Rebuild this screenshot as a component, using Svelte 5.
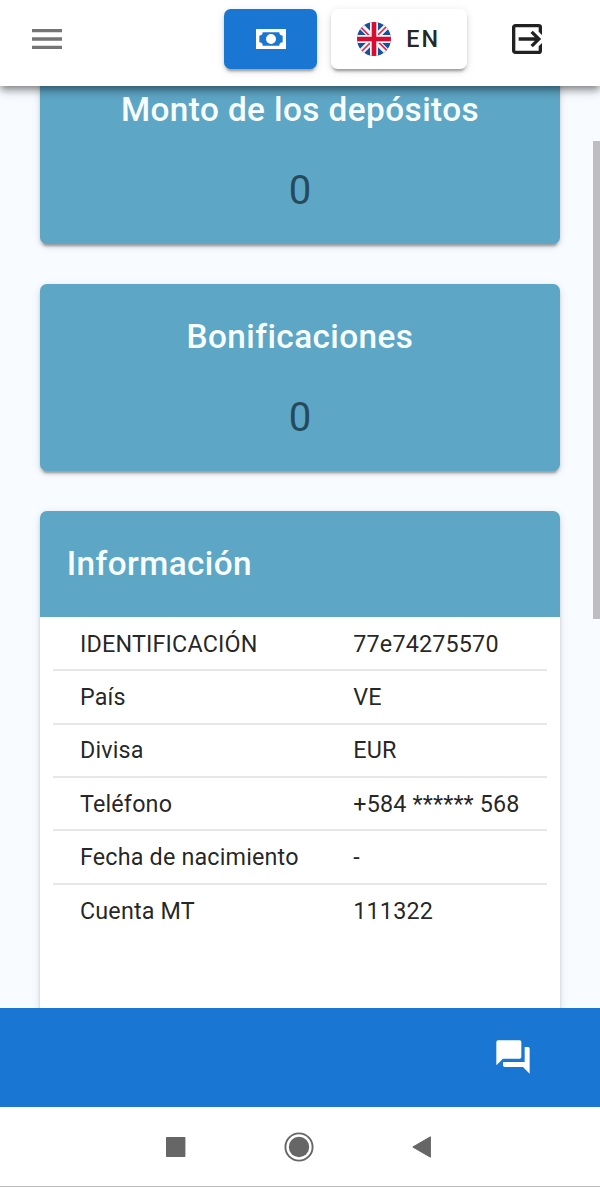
<script>
  const stats = [
    { title: 'Monto de los depósitos', value: '0' },
    { title: 'Bonificaciones', value: '0' }
  ];
  const info = [
    ['IDENTIFICACIÓN', '77e74275570'],
    ['País', 'VE'],
    ['Divisa', 'EUR'],
    ['Teléfono', '+584 ****** 568'],
    ['Fecha de nacimiento', '-'],
    ['Cuenta MT', '111322']
  ];
</script>

<div class="screen">
  <header>
    <svg class="icon menu" viewBox="0 0 24 24"><path d="M3,6H21V8H3V6M3,11H21V13H3V11M3,16H21V18H3V16Z" /></svg>
    <button class="cash" aria-label="Cash">
      <svg class="icon" viewBox="0 0 24 24"><path d="M3,6H21V18H3V6M12,9A3,3 0 0,1 15,12A3,3 0 0,1 12,15A3,3 0 0,1 9,12A3,3 0 0,1 12,9M7,8A2,2 0 0,1 5,10V14A2,2 0 0,1 7,16H17A2,2 0 0,1 19,14V10A2,2 0 0,1 17,8H7Z" /></svg>
    </button>
    <button class="lang">
      <svg class="flag" viewBox="0 0 34 34">
        <defs><clipPath id="round"><circle cx="17" cy="17" r="17" /></clipPath></defs>
        <g clip-path="url(#round)">
          <rect width="34" height="34" fill="#17509b" />
          <path d="M0 0L34 34M34 0L0 34" stroke="#f3f3fa" stroke-width="6" />
          <path d="M3 4.4L13 14.4M21 13L31 3M31 29.6L21 19.6M13 21L3 31" stroke="#d5304f" stroke-width="1.7" />
          <path d="M17 0V34M0 17H34" stroke="#f7f5fa" stroke-width="8" />
          <path d="M17 0V34M0 17H34" stroke="#d80b30" stroke-width="4.6" />
        </g>
      </svg>
      <span>EN</span>
    </button>
    <svg class="icon exit" viewBox="0 0 24 24"><path d="M14.08,15.59L16.67,13H7V11H16.67L14.08,8.41L15.5,7L20.5,12L15.5,17L14.08,15.59M19,3A2,2 0 0,1 21,5V9.67L19,7.67V5H5V19H19V16.33L21,14.33V19A2,2 0 0,1 19,21H5C3.89,21 3,20.1 3,19V5C3,3.89 3.89,3 5,3H19Z" /></svg>
  </header>

  <main>
    {#each stats as stat}
      <section class="card stat">
        <h2>{stat.title}</h2>
        <p>{stat.value}</p>
      </section>
    {/each}
    <section class="card details">
      <h2>{'Información'}</h2>
      <dl>
        {#each info as [label, value]}
          <div class="row"><dt>{label}</dt><dd>{value}</dd></div>
        {/each}
      </dl>
    </section>
    <div class="scrollbar"></div>
  </main>

  <footer>
    <svg class="icon" viewBox="0 0 24 24"><path d="M17,12V3A1,1 0 0,0 16,2H3A1,1 0 0,0 2,3V17L6,13H16A1,1 0 0,0 17,12M21,6H19V15H6V17A1,1 0 0,0 7,18H18L22,22V7A1,1 0 0,0 21,6Z" /></svg>
  </footer>

  <nav>
    <svg width="20" height="20" viewBox="0 0 20 20"><rect width="19.4" height="20" rx="0.8" /></svg>
    <svg width="30" height="30" viewBox="0 0 30 30"><circle cx="15" cy="15" r="13.6" fill="none" stroke="#666" stroke-width="1.9" /><circle cx="15" cy="15" r="10.2" /></svg>
    <svg width="20" height="22" viewBox="0 0 20 22"><path d="M0.8 11L18.4 0.8V21.2Z" stroke="#666" stroke-width="1" stroke-linejoin="round" /></svg>
  </nav>
</div>

<style>
  :global(body) { margin: 0; }
  .screen {
    width: 600px;
    height: 1187px;
    display: flex;
    flex-direction: column;
    overflow: hidden;
    background: #f8fbff;
    font-family: Roboto, sans-serif;
    color: rgba(0, 0, 0, 0.87);
  }
  header {
    height: 85.5px;
    flex: none;
    box-sizing: border-box;
    padding: 0 53.4px 7.5px 26.6px;
    display: flex;
    align-items: center;
    background: #fff;
    z-index: 1;
    box-shadow: 0 3px 7px -1px rgba(0, 0, 0, 0.36), 0 6px 8px rgba(0, 0, 0, 0.16), 0 2px 16px rgba(0, 0, 0, 0.1);
  }
  .icon { width: 40px; height: 40px; flex: none; fill: currentColor; display: block; }
  .menu { color: #757575; margin-right: auto; }
  .exit { margin-left: 40px; }
  button {
    height: 60px;
    padding: 0;
    border: 0;
    border-radius: 6.7px;
    display: flex;
    align-items: center;
    justify-content: center;
    font: inherit;
    color: inherit;
    box-shadow: 0 5px 2px -3px rgba(0, 0, 0, 0.2), 0 3px 3px rgba(0, 0, 0, 0.14), 0 2px 8px rgba(0, 0, 0, 0.12);
  }
  .cash { width: 93.3px; background: #1976d2; color: #fff; }
  .lang { width: 136px; margin-left: 13.4px; background: #fff; }
  .flag { width: 34px; height: 34px; margin-right: 15px; }
  .lang span { font-size: 23.33px; font-weight: 500; letter-spacing: 2.08px; }
  main {
    position: relative;
    height: 922px;
    flex: none;
    box-sizing: border-box;
    overflow: hidden;
    padding: 0 40px;
    display: flex;
    flex-direction: column;
    gap: 40px;
  }
  .card {
    flex: none;
    border-radius: 6.7px;
    box-shadow: 0 5px 2px -3px rgba(0, 0, 0, 0.2), 0 3px 3px rgba(0, 0, 0, 0.14), 0 2px 8px rgba(0, 0, 0, 0.12);
  }
  .stat {
    height: 186.67px;
    box-sizing: border-box;
    padding: 25.67px 26.67px;
    background: #5ea6c6;
    text-align: center;
  }
  .stat:first-child { margin-top: -27.9px; }
  h2 {
    margin: 0;
    font-size: 33.33px;
    line-height: 53.33px;
    font-weight: 500;
    letter-spacing: 0.42px;
    color: #f8ffff;
  }
  .stat p {
    margin: 27.67px 0 0;
    font-size: 40px;
    line-height: 53.33px;
    color: #254a5b;
  }
  .details { height: 560px; overflow: hidden; background: #fff; }
  .details h2 { padding: 25.67px 26.67px 27.2px; background: #5ea6c6; }
  dl { margin: 0 13.33px; padding-top: 0.8px; }
  .row {
    height: 53.33px;
    box-sizing: border-box;
    padding: 0 26.67px;
    display: grid;
    grid-template-columns: 273.33px 1fr;
    align-items: center;
    border-bottom: 2px solid #e7e7e7;
    font-size: 23.33px;
    letter-spacing: 0.17px;
    white-space: nowrap;
  }
  .row:last-child { border-bottom: 0; }
  dd { margin: 0; }
  .scrollbar {
    position: absolute;
    right: 0;
    top: 55.8px;
    width: 7px;
    height: 478px;
    background: #bdbdc2;
  }
  footer {
    height: 99px;
    flex: none;
    box-sizing: border-box;
    padding-right: 67.4px;
    display: flex;
    align-items: center;
    justify-content: flex-end;
    background: #1976d2;
    color: #fff;
  }
  nav {
    flex: 1;
    box-sizing: border-box;
    padding: 1px 167.6px 0 165.7px;
    display: flex;
    align-items: center;
    justify-content: space-between;
    background: #fff;
    border-bottom: 1px solid #bbb;
    fill: #666;
  }
</style>
